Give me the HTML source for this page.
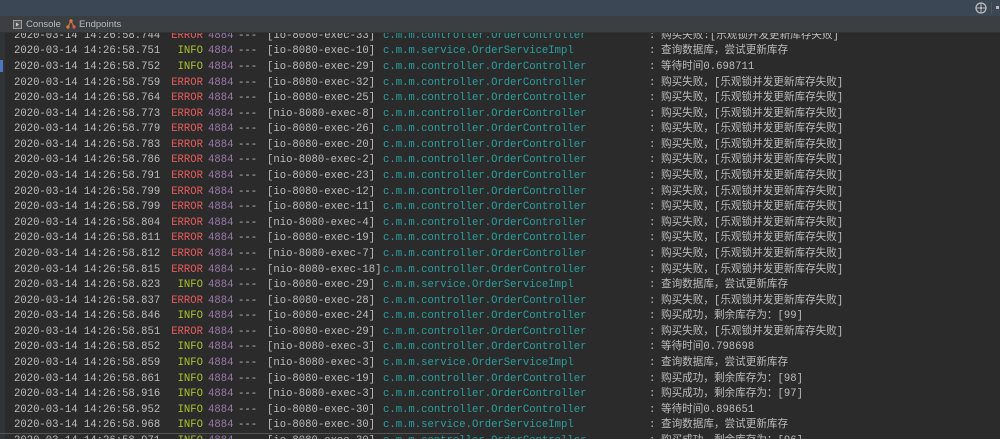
<!DOCTYPE html>
<html><head><meta charset="utf-8"><style>
*{margin:0;padding:0;box-sizing:border-box}
body{width:1000px;height:439px;overflow:hidden;background:#2b2b2b;font-family:"Liberation Mono","Noto Sans CJK SC",monospace;position:relative}
#top{position:absolute;left:0;top:0;width:1000px;height:16px;background:#3c4756}
#tabs{position:absolute;left:0;top:16px;width:1000px;height:17px;background:#3c3f41;border-bottom:1px solid #323232;font-family:"Liberation Sans",sans-serif;font-size:9.5px;color:#bbb}
#gut{position:absolute;left:0;top:33px;width:5px;height:406px;background:#313335}
#log{position:absolute;left:0;top:33px;width:1000px;height:406px;overflow:hidden}
.r{position:absolute;left:0;height:15.6px;width:1000px;font-size:10.6px;line-height:15.6px;color:#bdbdbd;white-space:pre}
.r span{position:absolute;top:0}
.d{left:14px}.lv{left:170px;width:33px;text-align:right}.p{left:208px;color:#9c79ae}.s{left:238px}.t{left:267px}.c{left:383px;color:#2aa0a0}.co{left:649px}.m{left:661px}
.E{color:#e65c5c}.I{color:#abc22e}
</style></head><body>
<div id="top">
<svg style="position:absolute;left:975px;top:2px" width="12" height="12" viewBox="0 0 12 12"><circle cx="6" cy="6" r="5" fill="none" stroke="#bbb" stroke-width="1.3"/><circle cx="6" cy="6" r="1.5" fill="#bbb"/><path d="M6 1v3M6 8v3M1 6h3M8 6h3" stroke="#bbb" stroke-width="1"/></svg>
<div style="position:absolute;left:991px;top:2px;width:1px;height:12px;background:#555"></div>
<div style="position:absolute;left:996px;top:6px;width:3px;height:3px;background:#bbb"></div>
</div>
<div id="tabs">
<svg style="position:absolute;left:13px;top:4px" width="9" height="9"><rect x="0.5" y="0.5" width="8" height="8" fill="#555" stroke="#999"/><path d="M3 2.5l3 2-3 2z" fill="#ccc"/></svg>
<span style="position:absolute;left:26px;top:3px">Console</span>
<svg style="position:absolute;left:66px;top:3px" width="10" height="11"><circle cx="5" cy="2" r="1.7" fill="#d9793a"/><circle cx="2" cy="8" r="1.7" fill="#d9793a"/><circle cx="8" cy="8" r="1.7" fill="#d05050"/><path d="M5 2L2 8M5 2L8 8" stroke="#d9793a" stroke-width="1"/></svg>
<span style="position:absolute;left:79px;top:3px">Endpoints</span>
</div>
<div id="gut"></div>
<div style="position:absolute;left:0;top:60px;width:3px;height:12px;background:#4a78c2"></div>
<div id="log">
<div class="r" style="top:-4px"><span class="d">2020-03-14 14:26:58.744</span><span class="lv E">ERROR</span><span class="p">4884</span><span class="s">---</span><span class="t">[io-8080-exec-33]</span><span class="c">c.m.m.controller.OrderController</span><span class="co">:</span><span class="m">购买失败:[乐观锁并发更新库存失败]</span></div>
<div id="rows"></div>
</div>
<div style="position:absolute;left:0;top:433px;width:460px;height:1px;background:#555"></div>
<script>
var d=[
["751","I","io-8080-exec-10","s","查询数据库，尝试更新库存"],
["752","I","io-8080-exec-29","c","等待时间0.698711"],
["759","E","io-8080-exec-32","c","购买失败，[乐观锁并发更新库存失败]"],
["764","E","io-8080-exec-25","c","购买失败，[乐观锁并发更新库存失败]"],
["773","E","nio-8080-exec-8","c","购买失败，[乐观锁并发更新库存失败]"],
["779","E","io-8080-exec-26","c","购买失败，[乐观锁并发更新库存失败]"],
["783","E","io-8080-exec-20","c","购买失败，[乐观锁并发更新库存失败]"],
["786","E","nio-8080-exec-2","c","购买失败，[乐观锁并发更新库存失败]"],
["791","E","io-8080-exec-23","c","购买失败，[乐观锁并发更新库存失败]"],
["799","E","io-8080-exec-12","c","购买失败，[乐观锁并发更新库存失败]"],
["799","E","io-8080-exec-11","c","购买失败，[乐观锁并发更新库存失败]"],
["804","E","nio-8080-exec-4","c","购买失败，[乐观锁并发更新库存失败]"],
["811","E","io-8080-exec-19","c","购买失败，[乐观锁并发更新库存失败]"],
["812","E","nio-8080-exec-7","c","购买失败，[乐观锁并发更新库存失败]"],
["815","E","nio-8080-exec-18","c","购买失败，[乐观锁并发更新库存失败]"],
["823","I","io-8080-exec-29","s","查询数据库，尝试更新库存"],
["837","E","io-8080-exec-28","c","购买失败，[乐观锁并发更新库存失败]"],
["846","I","io-8080-exec-24","c","购买成功，剩余库存为：[99]"],
["851","E","io-8080-exec-29","c","购买失败，[乐观锁并发更新库存失败]"],
["852","I","nio-8080-exec-3","c","等待时间0.798698"],
["859","I","nio-8080-exec-3","s","查询数据库，尝试更新库存"],
["861","I","io-8080-exec-19","c","购买成功，剩余库存为：[98]"],
["916","I","nio-8080-exec-3","c","购买成功，剩余库存为：[97]"],
["952","I","io-8080-exec-30","c","等待时间0.898651"],
["968","I","io-8080-exec-30","s","查询数据库，尝试更新库存"],
["971","I","io-8080-exec-30","c","购买成功，剩余库存为：[96]"]];
var h="";
d.forEach(function(r,i){
var top=11.4+i*15.58;
h+='<div class="r" style="top:'+top+'px"><span class="d">2020-03-14 14:26:58.'+r[0]+'</span><span class="lv '+r[1]+'">'+(r[1]=="E"?"ERROR":"INFO")+'</span><span class="p">4884</span><span class="s">---</span><span class="t">['+r[2]+']</span><span class="c">'+(r[3]=="s"?"c.m.m.service.OrderServiceImpl":"c.m.m.controller.OrderController")+'</span><span class="co">:</span><span class="m">'+r[4]+'</span></div>';
});
document.getElementById("rows").outerHTML=h;
</script>
</body></html>
